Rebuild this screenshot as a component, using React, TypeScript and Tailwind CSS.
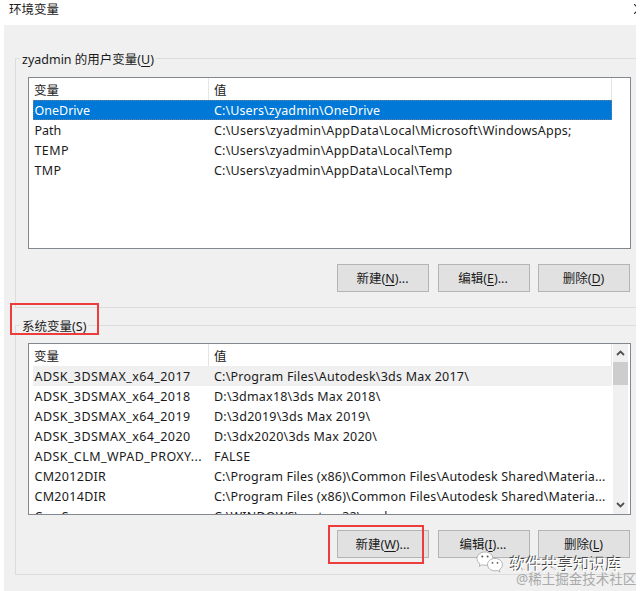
import type { ReactNode } from 'react'
import { clsx } from 'clsx'

type Row = { name: string; value: string; nameClass?: string; valueClass?: string }

const userVars: Row[] = [
  { name: 'OneDrive', value: 'C:\\Users\\zyadmin\\OneDrive', valueClass: 'tracking-[0.1px]' },
  { name: 'Path', value: 'C:\\Users\\zyadmin\\AppData\\Local\\Microsoft\\WindowsApps;', valueClass: 'tracking-[0.24px]' },
  { name: 'TEMP', value: 'C:\\Users\\zyadmin\\AppData\\Local\\Temp', nameClass: 'tracking-[0.4px]' },
  { name: 'TMP', value: 'C:\\Users\\zyadmin\\AppData\\Local\\Temp', nameClass: 'tracking-[0.4px]' },
]

const systemVars: Row[] = [
  { name: 'ADSK_3DSMAX_x64_2017', value: 'C:\\Program Files\\Autodesk\\3ds Max 2017\\', nameClass: 'tracking-[0.42px]', valueClass: 'tracking-[0.22px]' },
  { name: 'ADSK_3DSMAX_x64_2018', value: 'D:\\3dmax18\\3ds Max 2018\\', nameClass: 'tracking-[0.42px]' },
  { name: 'ADSK_3DSMAX_x64_2019', value: 'D:\\3d2019\\3ds Max 2019\\', nameClass: 'tracking-[0.42px]', valueClass: 'tracking-[0.24px]' },
  { name: 'ADSK_3DSMAX_x64_2020', value: 'D:\\3dx2020\\3ds Max 2020\\', nameClass: 'tracking-[0.42px]', valueClass: 'tracking-[0.24px]' },
  { name: 'ADSK_CLM_WPAD_PROXY...', value: 'FALSE', nameClass: 'tracking-[0.42px]', valueClass: 'tracking-[0.4px]' },
  { name: 'CM2012DIR', value: 'C:\\Program Files (x86)\\Common Files\\Autodesk Shared\\Materia...', nameClass: 'tracking-[0.3px]', valueClass: 'tracking-[0.18px]' },
  { name: 'CM2014DIR', value: 'C:\\Program Files (x86)\\Common Files\\Autodesk Shared\\Materia...', nameClass: 'tracking-[0.3px]', valueClass: 'tracking-[0.18px]' },
  { name: 'ComSpec', value: 'C:\\WINDOWS\\system32\\cmd' },
]

function DialogButton({ label, hotkey, more }: { label: string; hotkey: string; more?: boolean }) {
  return (
    <button className="h-7 w-[92px] shrink-0 border border-[#b4b4b4] bg-[#e1e1e1] pr-px text-center leading-[27px]">
      {label}(<span className="underline underline-offset-2">{hotkey}</span>){more && '...'}
    </button>
  )
}

function ScrollBar() {
  return (
    <div className="ml-px flex w-[15px] flex-col bg-[#f0f0f0]">
      <div className="flex h-[18px] items-center justify-center">
        <svg width="9" height="6" viewBox="0 0 9 6" fill="none" stroke="#505050" strokeWidth="1.8">
          <path d="M1 5 4.5 1.5 8 5" />
        </svg>
      </div>
      <div className="h-[23px] bg-[#cdcdcd]" />
      <div className="mt-auto flex h-[19px] items-center justify-center">
        <svg width="9" height="6" viewBox="0 0 9 6" fill="none" stroke="#505050" strokeWidth="1.8">
          <path d="M1 1 4.5 4.5 8 1" />
        </svg>
      </div>
    </div>
  )
}

function VarList({ rows, focused, scroll }: { rows: Row[]; focused?: boolean; scroll?: boolean }) {
  return (
    <div className="flex h-[172px] w-[603px] overflow-hidden border border-[#828790] bg-white">
      <div className="w-[583px] shrink-0">
        <div className="flex h-[22px] border-r border-[#e5e5e5] leading-[25px]">
          <div className="w-[180px] border-r border-[#e5e5e5] pl-[5px]">变量</div>
          <div className="pl-[5px]">值</div>
        </div>
        {rows.map((row, i) => (
          <div
            key={row.name}
            className={clsx(
              'ml-1 flex h-5 whitespace-nowrap leading-[21px]',
              i === 0 && focused && 'bg-[#0078d7] text-white outline-1 -outline-offset-1 outline-dotted outline-[#6c7f99]',
              i === 0 && !focused && 'bg-[#f0f0f0]',
            )}
          >
            <div className={clsx('w-[181px] shrink-0 pl-[1.5px]', row.nameClass)}>{row.name}</div>
            <div className={row.valueClass ?? 'tracking-[0.2px]'}>{row.value}</div>
          </div>
        ))}
      </div>
      {scroll && <ScrollBar />}
    </div>
  )
}

function Group({ title, className, children }: { title: ReactNode; className: string; children: ReactNode }) {
  return (
    <section className={clsx('ml-[11px] border-y border-l border-[#dcdcdc] pl-3', className)}>
      <h2 className="-mt-[10px] -ml-[8px] h-5 w-fit bg-[#f0f0f0] px-[2px] leading-[21px]">{title}</h2>
      {children}
    </section>
  )
}

function WeChatLogo() {
  return (
    <svg width="28" height="22" viewBox="0 0 28 22" fill="#fff" stroke="#8a8a8a" strokeWidth="0.6">
      <path d="M9 1C4.4 1 1 4 1 7.6c0 2.1 1.1 3.9 3 5.1l-.7 2.6 2.9-1.5c.9.3 1.800.4 2.800.4 4.5 0 8-3 8-6.6S13.5 1 9 1Z" />
      <path d="M19 7.5c-4.4 0-7.5 2.7-7.5 6.100s3.100 6.200 7.500 6.200c.9 0 1.700-.1 2.500-.3l2.500 1.400-.6-2.300c1.900-1.200 3-2.900 3-5 0-3.400-3.100-6.100-7.400-6.100Z" />
      <g fill="#555" stroke="none">
        <circle cx="6.3" cy="5.6" r="1" />
        <circle cx="11.6" cy="5.6" r="1" />
        <circle cx="16.5" cy="11.8" r=".9" />
        <circle cx="21.5" cy="11.8" r=".9" />
      </g>
    </svg>
  )
}

export default function App() {
  return (
    <div className="relative h-[591px] w-[641px] overflow-hidden bg-white font-['Noto_Sans','Noto_Sans_CJK_SC',sans-serif] text-[12.5px] text-[#1a1a1a]">
      <header className="flex h-[25px] items-start justify-between pr-[5px] pl-[9px]">
        <h1 className="leading-[19px]">环境变量</h1>
        <div className="mt-1 w-[2px] overflow-hidden">
          <svg width="10" height="10" viewBox="0 0 10 10" stroke="#222" strokeWidth="1.1">
            <path d="M0 0 10 10M10 0 0 10" />
          </svg>
        </div>
      </header>
      <main className="ml-1 h-[566px] w-[632px] bg-[#f0f0f0] pt-[33px]">
        <Group className="h-[250px]" title={<>zyadmin 的用户变量(<u className="underline-offset-2">U</u>)</>}>
          <div className="mt-[8px]">
            <VarList rows={userVars} focused />
          </div>
          <div className="mt-[15px] flex gap-[8.5px] pl-[309px]">
            <DialogButton label="新建" hotkey="N" more />
            <DialogButton label="编辑" hotkey="E" more />
            <DialogButton label="删除" hotkey="D" />
          </div>
        </Group>
        <Group className="mt-[17px] h-[250px]" title={<>系统变量(<u className="underline-offset-2">S</u>)</>}>
          <div className="mt-[7px]">
            <VarList rows={systemVars} scroll />
          </div>
          <div className="mt-[15px] flex gap-[8.5px] pl-[309px]">
            <DialogButton label="新建" hotkey="W" more />
            <DialogButton label="编辑" hotkey="I" more />
            <DialogButton label="删除" hotkey="L" />
          </div>
        </Group>
      </main>

      {/* highlight marks */}
      <div className="absolute top-[303px] left-[10px] h-[32px] w-[89px] border-2 border-[#ec3c3c]" />
      <div className="absolute top-[525px] left-[328px] h-[39px] w-[96px] border-2 border-[#ec3c3c]" />

      {/* watermarks */}
      <div className="absolute top-[551px] left-[476px]">
        <WeChatLogo />
      </div>
      <div className="absolute top-[552px] left-[510px] text-[16px] leading-6 whitespace-nowrap text-white [text-shadow:-1px_-1px_0_#444]">
        软件共享知识库
      </div>
      <div className="absolute top-[569px] left-[516px] text-[13.5px] leading-5 whitespace-nowrap text-[#aaaaaa]">
        @稀土掘金技术社区
      </div>
    </div>
  )
}
